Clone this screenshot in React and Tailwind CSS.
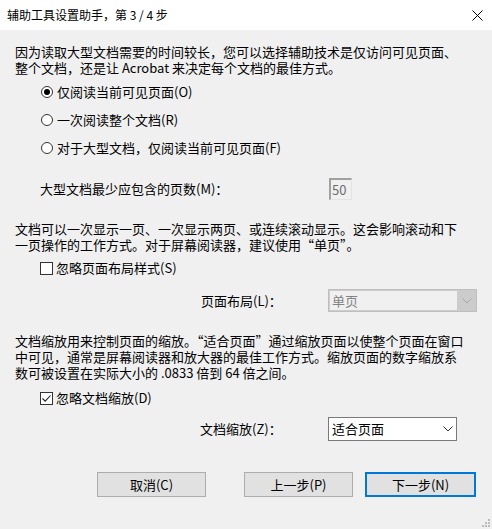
const font = {
  fontFamily: '"Microsoft YaHei", "Noto Sans CJK SC", "Noto Sans", sans-serif',
};

function Radio({ checked, children }) {
  return (
    <div className="flex h-[20px] items-center">
      <span className="flex h-[12px] w-[12px] items-center justify-center rounded-full border border-[#333333] bg-white">
        {checked && <span className="h-[6px] w-[6px] rounded-full bg-[#000]" />}
      </span>
      <span className="ml-[4px]">{children}</span>
    </div>
  );
}

function Check({ checked, children }) {
  return (
    <div className="flex h-[20px] items-center">
      <span className="flex h-[13px] w-[13px] items-center justify-center border border-[#333333] bg-white">
        {checked && (
          <svg width="11" height="11" viewBox="0 0 11 11">
            <path d="M1.5 5.5 L4.2 8.2 L9.5 2.5" fill="none" stroke="#222" strokeWidth="1.1" />
          </svg>
        )}
      </span>
      <span className="ml-[3px]">{children}</span>
    </div>
  );
}

function Chevron({ color }) {
  return (
    <svg width="10" height="6" viewBox="0 0 10 6">
      <path d="M0.5 0.5 L5 5 L9.5 0.5" fill="none" stroke={color} strokeWidth="1" />
    </svg>
  );
}

function Button({ primary, children }) {
  return (
    <button
      className={
        primary
          ? "flex h-[25px] w-[111px] items-center justify-center border-2 border-[#0078d7] bg-[#e1e1e1] text-[13px] text-black"
          : "flex h-[25px] w-[109px] items-center justify-center border border-[#adadad] bg-[#e1e1e1] text-[13px] text-black"
      }
    >
      {children}
    </button>
  );
}

// 每行单独一块，行高固定 16px
function Lines({ lines, className }) {
  return (
    <div className={className}>
      {lines.map((l, i) => (
        <div key={i} className="flex h-[16px] items-center overflow-visible whitespace-nowrap">
          {l}
        </div>
      ))}
    </div>
  );
}

export default function App() {
  return (
    <div className="h-[529px] w-[492px] overflow-hidden bg-[#f0f0f0] text-[13px] text-black" style={font}>
      {/* 标题栏 */}
      <div className="flex h-[30px] items-center justify-between bg-white pl-[7px] pr-[9px] text-[12px]">
        <span>辅助工具设置助手，第 3 / 4 步</span>
        <svg width="11" height="11" viewBox="0 0 11 11">
          <path d="M0.5 0.5 L10.5 10.5 M10.5 0.5 L0.5 10.5" stroke="#000" strokeWidth="1" />
        </svg>
      </div>

      <div className="relative h-[499px] pl-[15px]">
        <Lines
          className="pt-[14px]"
          lines={[
            "因为读取大型文档需要的时间较长，您可以选择辅助技术是仅访问可见页面、",
            "整个文档，还是让 Acrobat 来决定每个文档的最佳方式。",
          ]}
        />

        <div className="mt-[6px] flex flex-col gap-[8px] pl-[26px]">
          <Radio checked>仅阅读当前可见页面(O)</Radio>
          <Radio>一次阅读整个文档(R)</Radio>
          <Radio>对于大型文档，仅阅读当前可见页面(F)</Radio>
        </div>

        <div className="mt-[20px] flex h-[22px] items-center pl-[25px]">
          <span className="w-[289px]">大型文档最少应包含的页数(M)：</span>
          <div className="flex h-[22px] w-[23px] items-center border-l-2 border-t-2 border-b border-r border-l-[#a0a0a0] border-t-[#a0a0a0] border-b-[#e3e3e3] border-r-[#e3e3e3] bg-[#f0f0f0] pl-[1px] text-[#6d6d6d]">
            50
          </div>
        </div>

        <Lines
          className="mt-[21px]"
          lines={[
            "文档可以一次显示一页、一次显示两页、或连续滚动显示。这会影响滚动和下",
            "一页操作的工作方式。对于屏幕阅读器，建议使用“单页”。",
          ]}
        />

        <div className="mt-[5px] pl-[25px]">
          <Check>忽略页面布局样式(S)</Check>
        </div>

        <div className="mt-[11px] flex h-[23px] items-center pl-[186px]">
          <span className="w-[127px]">页面布局(L)：</span>
          <div className="flex h-[23px] w-[149px] items-center border border-[#bfbfbf] bg-[#cccccc]">
            <div className="ml-[1px] flex h-[19px] w-[127px] items-center bg-[#f0f0f0] pl-[2px] text-[#838383]">单页</div>
            <div className="flex flex-1 items-center justify-center">
              <Chevron color="#a6a6a6" />
            </div>
          </div>
        </div>

        <Lines
          className="mt-[21px]"
          lines={[
            "文档缩放用来控制页面的缩放。“适合页面”通过缩放页面以使整个页面在窗口",
            "中可见，通常是屏幕阅读器和放大器的最佳工作方式。缩放页面的数字缩放系",
            "数可被设置在实际大小的 .0833 倍到 64 倍之间。",
          ]}
        />

        <div className="mt-[7px] pl-[25px]">
          <Check checked>忽略文档缩放(D)</Check>
        </div>

        <div className="mt-[9px] flex h-[24px] items-center pl-[185px]">
          <span className="w-[128px]">文档缩放(Z)：</span>
          <div className="flex h-[24px] w-[129px] items-center justify-between border border-[#7a7a7a] bg-white pl-[3px] pr-[3px]">
            <span>适合页面</span>
            <Chevron color="#333" />
          </div>
        </div>

        <div className="mt-[31px] flex items-center pl-[82px]">
          <Button>取消(C)</Button>
          <div className="ml-[38px]">
            <Button>上一步(P)</Button>
          </div>
          <div className="ml-[12px]">
            <Button primary>下一步(N)</Button>
          </div>
        </div>

        {/* 尺寸调整手柄 */}
        <svg className="absolute bottom-[2px] right-[2px]" width="8" height="8" viewBox="0 0 8 8">
          <rect x="6" y="0" width="2" height="2" fill="#bcbcbc" />
          <rect x="3" y="3" width="2" height="2" fill="#bcbcbc" />
          <rect x="6" y="3" width="2" height="2" fill="#bcbcbc" />
          <rect x="0" y="6" width="2" height="2" fill="#bcbcbc" />
          <rect x="3" y="6" width="2" height="2" fill="#bcbcbc" />
          <rect x="6" y="6" width="2" height="2" fill="#bcbcbc" />
        </svg>
      </div>
    </div>
  );
}
